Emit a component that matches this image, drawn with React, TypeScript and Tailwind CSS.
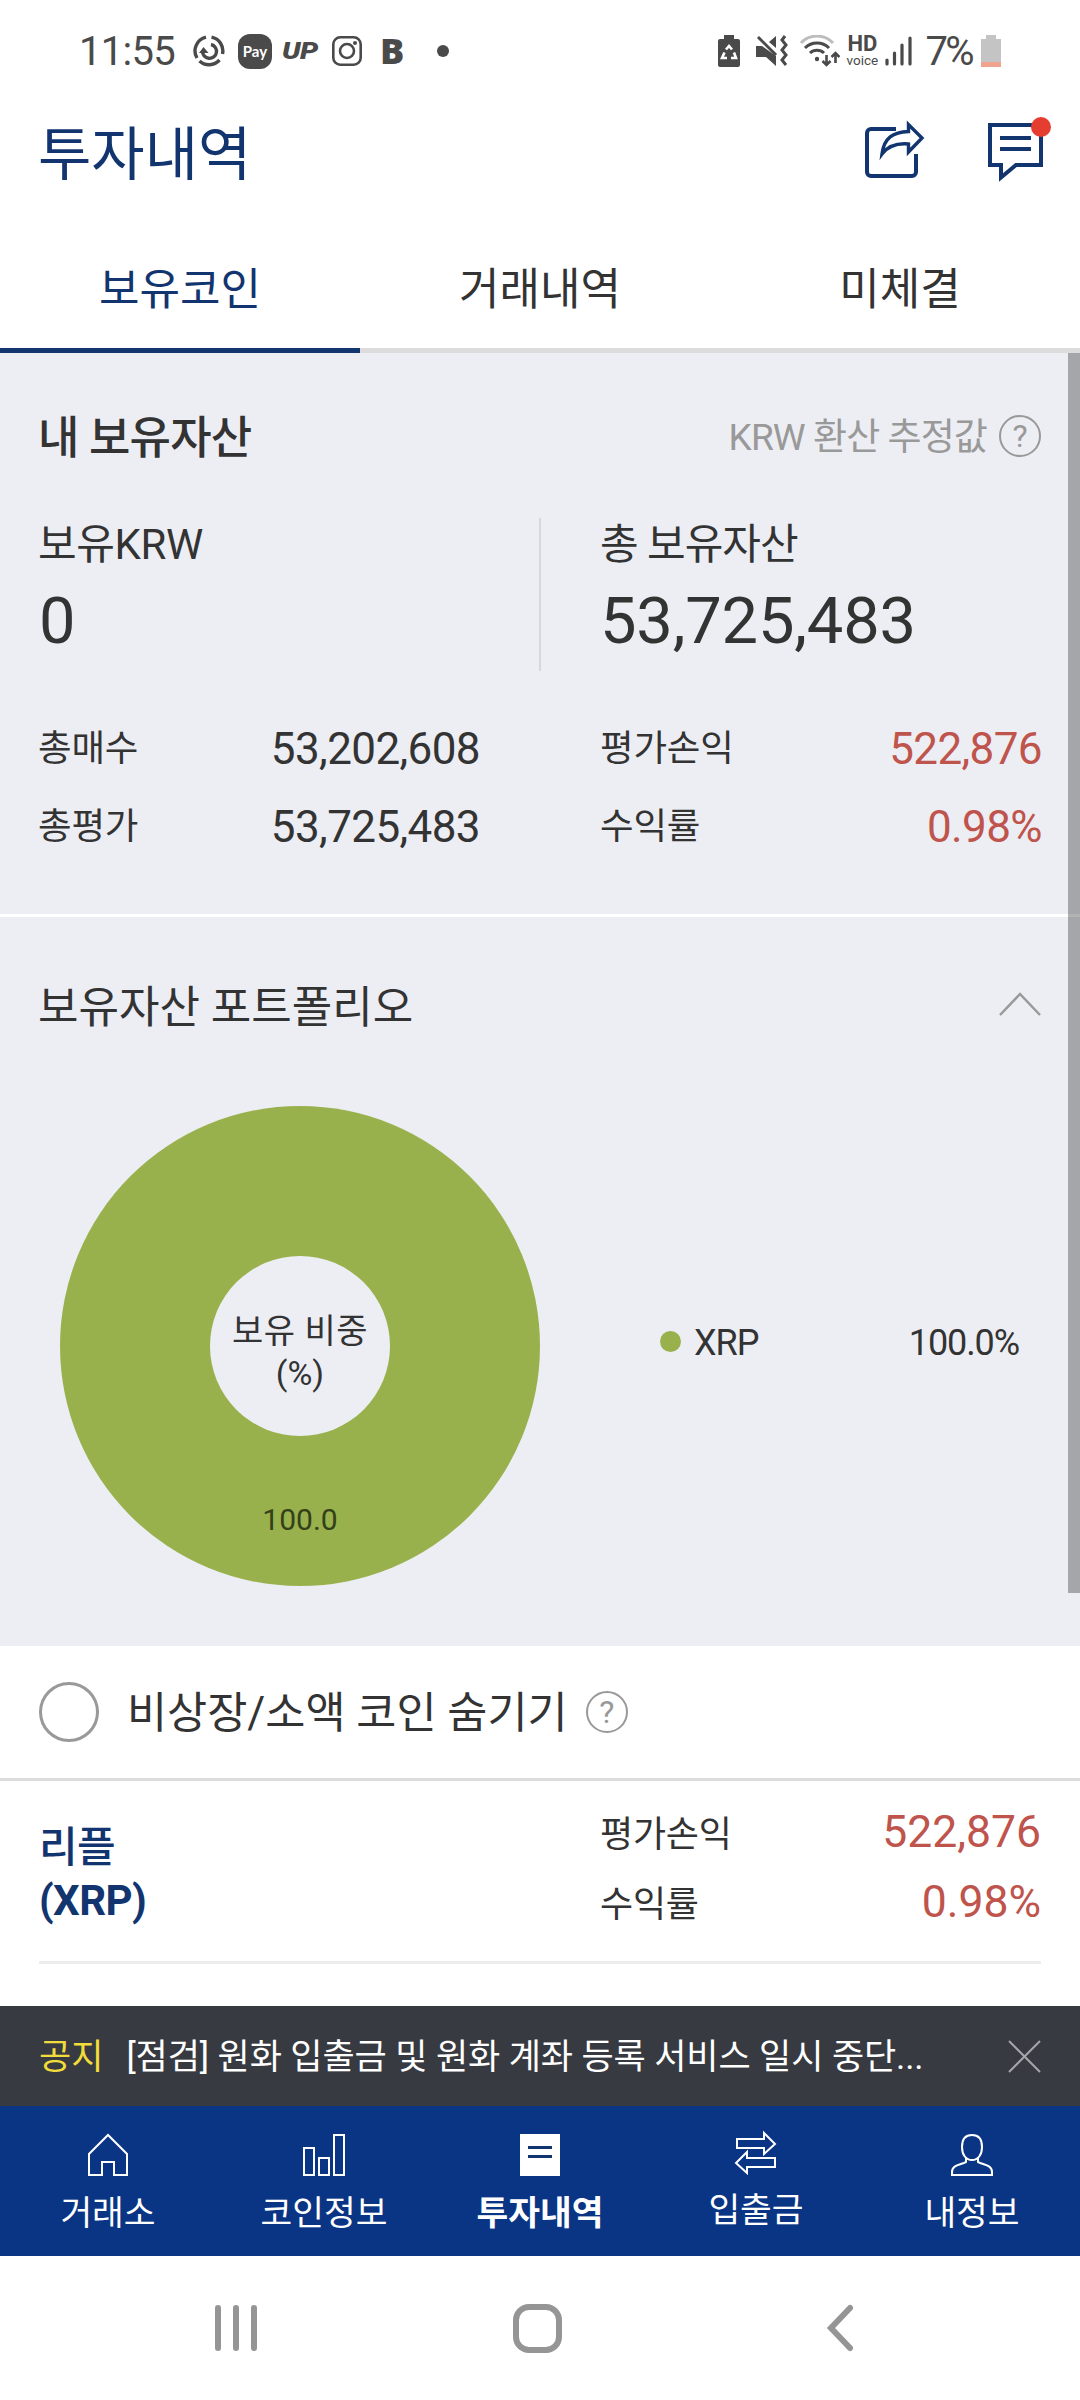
import React from "react";

interface RowProps {
  label: string;
  value: string;
}

interface NavItemProps {
  label: string;
  active?: boolean;
  raised?: boolean;
  children: React.ReactNode;
}

const navy = "#12356f";

const StatusBar: React.FC = () => (
  <div className="flex h-[102px] shrink-0 items-center pl-[79px] pr-[79px] text-[#4a4a4a]">
    <span className="w-[114px] pt-[2px] text-[40px] leading-none tracking-[-0.7px]">11:55</span>
    <svg className="h-[32px] w-[32px] shrink-0" viewBox="0 0 32 32" fill="none" stroke="currentColor" strokeWidth="3.4">
      <path d="M18.500 2.200A14 14 0 0 1 29.500 19M26.500 25a14 14 0 0 1-20 1M4 23A14 14 0 0 1 13 2.200" />
      <path d="M18 9.500a7 7 0 1 1-8.500 6.500" />
      <path d="M6 18l4.500-6 5 6z" fill="currentColor" stroke="none" />
    </svg>
    <div className="ml-[13px] flex h-[35px] w-[34px] shrink-0 items-center justify-center rounded-[12px] bg-[#4a4a4a] font-[Lato] text-[15px] font-bold leading-none text-white">
      Pay
    </div>
    <span className="ml-[10px] w-[39px] origin-left scale-x-120 text-[24px] font-black italic leading-none tracking-[-0.5px]">
      UP
    </span>
    <svg className="ml-[11px] h-[30px] w-[30px] shrink-0" viewBox="0 0 30 30" fill="none" stroke="currentColor" strokeWidth="2.6">
      <rect x="1.300" y="1.300" width="27.400" height="27.400" rx="7" />
      <circle cx="15" cy="15" r="7" />
      <circle cx="23" cy="7" r="2" fill="currentColor" stroke="none" />
    </svg>
    <span className="ml-[18px] w-[25px] font-['Open_Sans'] text-[36px] font-extrabold leading-none">B</span>
    <span className="ml-[32px] h-[12px] w-[12px] rounded-full bg-[#4a4a4a]" />

    <svg className="ml-auto h-[32px] w-[22px] shrink-0" viewBox="0 0 22 32">
      <path d="M6 0h10v4h4a2 2 0 0 1 2 2v24a2 2 0 0 1-2 2H2a2 2 0 0 1-2-2V6a2 2 0 0 1 2-2h4z" fill="currentColor" />
      <path d="M8 14.500l3-3.500 3 3.500M16 17.500l2 5.500h-5M9 23H4l2.500-5.500" fill="none" stroke="#fff" strokeWidth="2.600" />
    </svg>
    <svg className="ml-[16px] h-[32px] w-[32px] shrink-0" viewBox="0 0 32 32" fill="currentColor">
      <path d="M0 11h6l14 10v10L10 22H0zM13 7l7-6v12z" />
      <path d="M2 2l18 18" stroke="currentColor" strokeWidth="3" />
      <path d="M29 1l-3 4 4 5-4 5 4 5-4 5 4 5" fill="none" stroke="currentColor" strokeWidth="3" />
    </svg>
    <svg className="ml-[12px] h-[32px] w-[40px] shrink-0" viewBox="0 0 40 32" fill="none" strokeWidth="3">
      <path d="M1 8a22 22 0 0 1 32 0" stroke="#bdbdbd" />
      <path d="M5 13a17 17 0 0 1 24 0M10 18a10 10 0 0 1 14 0" stroke="currentColor" />
      <circle cx="17" cy="24" r="2.200" fill="currentColor" />
      <path d="M26.500 20v10m-4-4l4 4 4-4M35.500 28V18m-4 4l4-4 4 4" stroke="currentColor" strokeWidth="2.600" />
    </svg>
    <div className="ml-[5px] flex w-[34px] flex-col items-center pb-[2px]">
      <span className="text-[22px] font-bold leading-[20px]">HD</span>
      <span className="text-[13.5px] leading-[12px]">voice</span>
    </div>
    <svg className="ml-[6px] h-[30px] w-[27px] shrink-0" viewBox="0 0 27 30" stroke="currentColor" strokeWidth="3.200" strokeLinecap="round">
      <path d="M2 24v4M9.500 17v11M17 9v19M25 2v26" />
    </svg>
    <span className="ml-[13px] pt-[2px] text-[40px] leading-none tracking-[-2.6px]">7%</span>
    <svg className="ml-[9px] h-[32px] w-[20px] shrink-0" viewBox="0 0 20 32">
      <path d="M5 0h10v4h5v28H0V4h5z" fill="#c4c4c4" />
      <path d="M0 27h20v5H0z" fill="#f0a38f" />
    </svg>
  </div>
);

const Header: React.FC = () => (
  <header className="flex h-[102px] shrink-0 items-start justify-between pl-[38px] pr-[29px]">
    <h1 className="mt-[12px] text-[58px] font-normal leading-[82px] text-[#12356f]">투자내역</h1>
    <div className="mt-[15px] flex gap-[63px]">
      <svg className="h-[66px] w-[60px]" viewBox="0 0 60 66" fill="none" stroke={navy} strokeWidth="4">
        <path d="M31 12H6a4 4 0 0 0-4 4v39a4 4 0 0 0 4 4h41a4 4 0 0 0 4-4V37" />
        <path d="M17 37C19 21 28 15 43.500 14.500V7.500L57 21 43.500 35v-8C32 26 23 29 17 37z" strokeWidth="3.400" />
      </svg>
      <svg className="h-[66px] w-[63px]" viewBox="0 0 63 66">
        <path d="M2 8h51v40H28L13 60.500V48H2z" fill="none" stroke={navy} strokeWidth="4" />
        <path d="M12 21h31M12 32h31" stroke={navy} strokeWidth="4" />
        <circle cx="53" cy="10" r="10" fill="#e53d30" />
      </svg>
    </div>
  </header>
);

const Tabs: React.FC = () => (
  <nav className="flex h-[149px] shrink-0 text-[44px] text-[#333]">
    <div className="flex flex-1 items-center justify-center border-b-[5px] border-[#12356f] pt-[28px] text-[#12356f]">
      보유코인
    </div>
    <div className="flex flex-1 items-center justify-center border-b-[5px] border-[#dcdcdc] pt-[28px]">거래내역</div>
    <div className="flex flex-1 items-center justify-center border-b-[5px] border-[#dcdcdc] pt-[28px]">미체결</div>
  </nav>
);

const HelpIcon: React.FC = () => (
  <span className="flex h-[42px] w-[42px] shrink-0 items-center justify-center rounded-full border-[2px] border-[#999] text-[32px] leading-none text-[#999]">
    ?
  </span>
);

const SummaryRow: React.FC<RowProps> = ({ label, value }) => (
  <div className="flex h-[78px] w-[442px] items-center justify-between">
    <span className="text-[36.5px] tracking-[-0.2px]">{label}</span>
    <span className="text-[44px] tracking-[-0.6px]">{value}</span>
  </div>
);

const ProfitRow: React.FC<RowProps> = ({ label, value }) => (
  <div className="flex h-[78px] flex-1 items-center justify-between pl-[120px]">
    <span className="text-[36.5px] tracking-[-0.2px]">{label}</span>
    <span className="text-[44px] tracking-[-0.6px] text-[#bf544d]">{value}</span>
  </div>
);

const Assets: React.FC = () => (
  <section className="h-[561px] shrink-0 pl-[38px] pr-[38px]">
    <div className="flex h-[165px] items-center justify-between">
      <h2 className="pt-[7px] text-[45px] font-medium tracking-[-0.8px]">내 보유자산</h2>
      <div className="flex items-center gap-[12px] pr-[1px]">
        <span className="pt-[5px] text-[37px] tracking-[-0.9px] text-[#999]">KRW 환산 추정값</span>
        <HelpIcon />
      </div>
    </div>
    <div className="flex h-[153px]">
      <div className="w-[503px] border-r-[2px] border-[#d8d8dc]">
        <p className="text-[42px] leading-[54px] tracking-[-0.4px]">보유KRW</p>
        <p className="mt-[9px] pl-[1px] text-[65px] leading-[80px]">0</p>
      </div>
      <div className="pl-[59px]">
        <p className="text-[42px] leading-[54px] tracking-[-1px]">총 보유자산</p>
        <p className="mt-[9px] text-[65px] leading-[80px] tracking-[-0.2px]">53,725,483</p>
      </div>
    </div>
    <div className="mt-[39px] flex">
      <SummaryRow label="총매수" value="53,202,608" />
      <ProfitRow label="평가손익" value="522,876" />
    </div>
    <div className="flex">
      <SummaryRow label="총평가" value="53,725,483" />
      <ProfitRow label="수익률" value="0.98%" />
    </div>
  </section>
);

const Portfolio: React.FC = () => (
  <section className="h-[732px] shrink-0 border-t-[3px] border-white">
    <div className="flex h-[178px] items-center justify-between pl-[38px] pr-[39px]">
      <h2 className="pt-[3px] text-[44px] font-normal">보유자산 포트폴리오</h2>
      <svg className="mb-[4px] h-[24px] w-[42px]" viewBox="0 0 42 24" fill="none" stroke="#999" strokeWidth="2.500">
        <path d="M1 23L21 2l20 21" />
      </svg>
    </div>
    <div className="flex items-center pl-[60px] pr-[61px] pt-[11px]">
      <div className="flex h-[480px] w-[480px] flex-col items-center rounded-full bg-[#98b14d]">
        <div className="mt-[150px] flex h-[180px] w-[180px] flex-col items-center justify-center rounded-full bg-[#edeef3] text-[34px] leading-[42px]">
          <span className="pt-[11px] tracking-[0.5px]">보유 비중</span>
          <span>(%)</span>
        </div>
        <span className="mt-[62px] text-[30px] leading-[44px] text-[#33401a]">100.0</span>
      </div>
      <span className="mb-[10px] ml-[120px] h-[21px] w-[21px] rounded-full bg-[#98b14d]" />
      <span className="mb-[7px] ml-[13px] text-[36px] tracking-[-1px]">XRP</span>
      <span className="mb-[7px] ml-auto text-[36px] tracking-[-1.1px]">100.0%</span>
    </div>
  </section>
);

const HideFilter: React.FC = () => (
  <div className="flex h-[135px] shrink-0 items-center border-b-[3px] border-[#dcdcdc] pl-[39px]">
    <span className="h-[60px] w-[60px] rounded-full border-[3px] border-[#999]" />
    <span className="ml-[28px] mr-[18px] pt-[3px] text-[43.6px]">비상장/소액 코인 숨기기</span>
    <HelpIcon />
  </div>
);

const CoinRow: React.FC = () => (
  <div className="h-[225px] shrink-0 px-[39px]">
    <div className="flex h-[183px] border-b-[3px] border-[#ededed]">
      <div className="w-[561px] pt-[40px] text-[42px] leading-[53px] tracking-[-0.6px] text-[#12356f]">
        <p className="font-medium">리플</p>
        <p className="font-bold">(XRP)</p>
      </div>
      <div className="flex flex-1 flex-col pt-[16px]">
        <div className="flex h-[70px] items-center justify-between">
          <span className="pt-[6px] text-[36px] tracking-[-0.2px]">평가손익</span>
          <span className="pt-[1px] text-[44.5px] text-[#bf544d]">522,876</span>
        </div>
        <div className="flex h-[70px] items-center justify-between">
          <span className="pt-[6px] text-[36px] tracking-[-0.2px]">수익률</span>
          <span className="pt-[1px] text-[44.5px] text-[#bf544d]">0.98%</span>
        </div>
      </div>
    </div>
  </div>
);

const Notice: React.FC = () => (
  <div className="flex h-[100px] shrink-0 items-center bg-[#373a40] pl-[39px] pr-[39px] text-[35px] text-white">
    <span className="pt-[5px] text-[#f2dc3c]">공지</span>
    <span className="ml-[23px] pt-[5px] tracking-[-0.1px]">[점검] 원화 입출금 및 원화 계좌 등록 서비스 일시 중단...</span>
    <svg className="ml-auto h-[33px] w-[33px]" viewBox="0 0 33 33" stroke="#a5a6a8" strokeWidth="2">
      <path d="M1 1l31 31M32 1L1 32" />
    </svg>
  </div>
);

const NavItem: React.FC<NavItemProps> = ({ label, active, raised, children }) => (
  <div className={`flex flex-1 flex-col items-center ${raised ? "pt-[23px]" : "pt-[26px]"}`}>
    <svg className="h-[46px] w-[46px]" viewBox="0 0 46 46" fill="none" stroke="#fff" strokeWidth="2">
      {children}
    </svg>
    <span className={`mt-[10px] text-[34.5px] leading-[50px] ${active ? "font-bold" : ""}`}>{label}</span>
  </div>
);

const BottomNav: React.FC = () => (
  <nav className="flex h-[150px] shrink-0 bg-[#0a3584] text-white">
    <NavItem label="거래소">
      <path d="M4 43V22L23 3l19 19v21H29V30H17v13z" />
    </NavItem>
    <NavItem label="코인정보">
      <path d="M3 16h10v27H3zM18 26h10v17H18zM33 3h10v40H33z" />
    </NavItem>
    <NavItem label="투자내역" active>
      <path d="M3 2h40v42H3z" fill="#fff" stroke="none" />
      <path d="M11 15.500h24M11 24.500h24" stroke="#12356f" strokeWidth="3" />
    </NavItem>
    <NavItem label="입출금" raised>
      <path d="M4 10h27V4l11 11-11 10v-6H4zM42 29H14v-6L3 34l11 10v-6h28z" />
    </NavItem>
    <NavItem label="내정보">
      <path d="M23 3c-7 0-10 5-10 12 0 8 4 13 10 13s10-5 10-13c0-7-3-12-10-12zM17 25v5C11 33 3 33 3 40v3h40v-3c0-7-8-7-14-10v-5" />
    </NavItem>
  </nav>
);

const SystemNav: React.FC = () => (
  <div className="flex h-[144px] shrink-0 items-center justify-between pl-[215px] pr-[226px]">
    <div className="flex gap-[12px]">
      <span className="h-[46px] w-[6px] rounded-full bg-[#959595]" />
      <span className="h-[46px] w-[6px] rounded-full bg-[#959595]" />
      <span className="h-[46px] w-[6px] rounded-full bg-[#959595]" />
    </div>
    <span className="mr-[8px] h-[49px] w-[49px] rounded-[16px] border-[6px] border-[#959595]" />
    <svg className="h-[48px] w-[28px]" viewBox="0 0 28 48" fill="none" stroke="#959595" strokeWidth="6" strokeLinecap="round">
      <path d="M24 4L5 24l19 20" />
    </svg>
  </div>
);

const App: React.FC = () => {
  return (
    <div className="flex h-[2400px] w-[1080px] flex-col overflow-hidden bg-white font-[Roboto,'Noto_Sans_CJK_KR',sans-serif] text-[#333]">
      <StatusBar />
      <Header />
      <Tabs />
      <main className="relative bg-[#edeef3]">
        <Assets />
        <Portfolio />
        <div className="absolute right-0 top-0 h-[1240px] w-[12px] bg-black/30" />
      </main>
      <HideFilter />
      <CoinRow />
      <Notice />
      <BottomNav />
      <SystemNav />
    </div>
  );
};

export default App;
